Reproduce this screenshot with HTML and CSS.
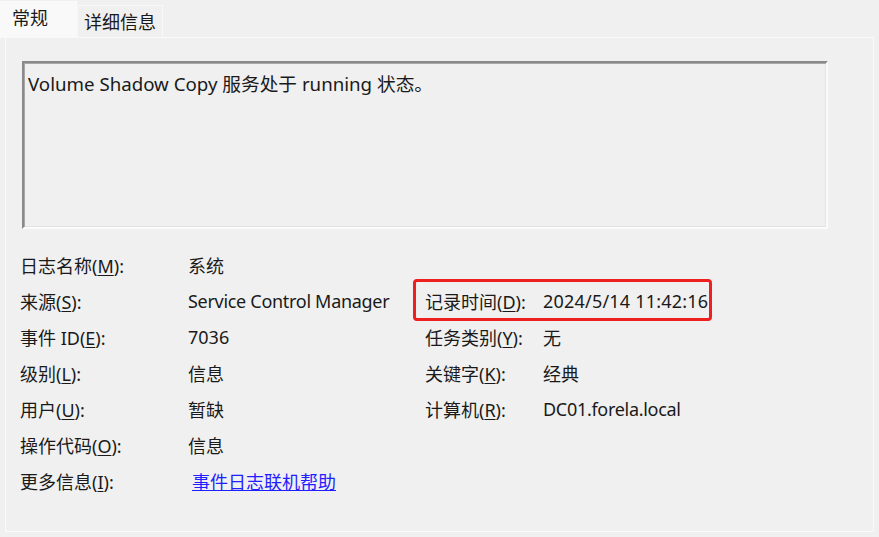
FILE: index.html
```html
<!DOCTYPE html>
<html lang="zh-CN">
<head>
<meta charset="utf-8">
<title>事件属性</title>
<link rel="stylesheet" href="styles.css">
</head>
<body>
<div class="window">
  <div class="tabs">
    <div class="tab active">常规</div>
    <div class="tab">详细信息</div>
  </div>
  <div class="panel">
    <div class="message">Volume Shadow Copy 服务处于 running 状态。</div>
    <div class="fields">
      <div class="label">日志名称(<u>M</u>):</div><div class="value">系统</div><div class="label2"></div><div class="value2"></div>
      <div class="label">来源(<u>S</u>):</div><div class="value tight">Service Control Manager</div><div class="label2">记录时间(<u>D</u>):</div><div class="value2 wide">2024/5/14 11:42:16</div>
      <div class="label">事件 ID(<u>E</u>):</div><div class="value">7036</div><div class="label2">任务类别(<u>Y</u>):</div><div class="value2">无</div>
      <div class="label">级别(<u>L</u>):</div><div class="value">信息</div><div class="label2">关键字(<u>K</u>):</div><div class="value2">经典</div>
      <div class="label">用户(<u>U</u>):</div><div class="value">暂缺</div><div class="label2">计算机(<u>R</u>):</div><div class="value2 tight">DC01.forela.local</div>
      <div class="label">操作代码(<u>O</u>):</div><div class="value">信息</div><div class="label2"></div><div class="value2"></div>
      <div class="label">更多信息(<u>I</u>):</div><div class="value"><a class="link" href="#">事件日志联机帮助</a></div><div class="label2"></div><div class="value2"></div>
      <div class="highlight"></div>
    </div>
  </div>
</div>
</body>
</html>
```

FILE: styles.css
```css
html, body {
  margin: 0;
  padding: 0;
}
body {
  width: 879px;
  height: 537px;
  background: #f0f0f0;
  font-family: "Noto Sans", "Noto Sans CJK SC", sans-serif;
  font-size: 18px;
  color: #1a1a1a;
  overflow: hidden;
}
.window {
  display: flex;
  flex-direction: column;
  height: 537px;
}
.tabs {
  display: flex;
  align-items: flex-end;
  height: 38px;
}
.tab {
  box-sizing: border-box;
  height: 33px;
  padding: 0 0 0 6px;
  line-height: 32px;
  background: #f0f0f0;
  border: 1px solid #f8f8f8;
  border-bottom: none;
  width: 86px;
  text-align: left;
  white-space: nowrap;
}
.tab.active {
  height: 37px;
  width: 77px;
  background: #f9f9f9;
  border-color: #f9f9f9;
  padding-left: 11px;
  line-height: 33px;
  position: relative;
  z-index: 1;
}
.panel {
  box-sizing: border-box;
  margin: -1px 5px 0 5px;
  height: 495px;
  border: 1px solid #fafafa;
  background: #f0f0f0;
  padding: 23px 0 0 14px;
}
.message {
  box-sizing: border-box;
  margin-left: 2px;
  width: 806px;
  height: 168px;
  border-top: 2px solid #8a8a8a;
  border-left: 2px solid #8a8a8a;
  border-right: 2px solid #fbfbfb;
  border-bottom: 2px solid #fbfbfb;
  box-shadow: inset 1px 1px 0 #a8a8a8, inset -1px -1px 0 #e3e3e3;
  padding: 8px 4px;
  font-size: 18.7px;
  line-height: 26px;
}
.fields {
  position: relative;
  display: grid;
  grid-template-columns: 168px 237px 118px 1fr;
  grid-auto-rows: 36px;
  margin-top: 18px;
  align-items: center;
}
.fields > div {
  white-space: nowrap;
}
.tight {
  letter-spacing: -0.3px;
}
.wide {
  letter-spacing: 0.2px;
}
.link {
  color: #1f1fff;
  text-decoration: underline;
  margin-left: 4px;
}
u {
  text-underline-offset: 2px;
}
.highlight {
  position: absolute;
  left: 393px;
  top: 32px;
  width: 299px;
  height: 42px;
  box-sizing: border-box;
  border: 3px solid #ee1f1f;
  border-radius: 4px;
}
```
